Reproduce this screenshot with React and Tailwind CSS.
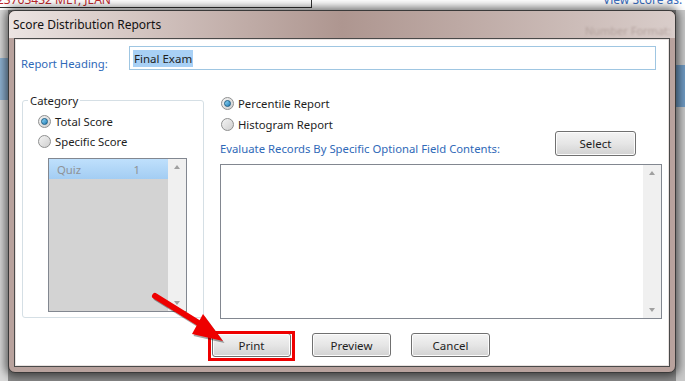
import React from "react";

const FONT = { fontFamily: '"Noto Sans", "Open Sans", sans-serif' };

function Radio({ checked, label }) {
  return (
    <div className="flex h-[15px] items-center gap-[4px] text-[11.3px] leading-[15px] text-[#1e1e1e]">
      <span className="flex h-[13px] w-[13px] items-center justify-center rounded-full border border-[#8e8f8f] bg-gradient-to-br from-[#f4f4f4] to-[#cfcfcf]">
        {checked && (
          <span className="h-[7px] w-[7px] rounded-full border border-[#1c5e85] bg-gradient-to-br from-[#8fd8f8] to-[#1a7fb8]" />
        )}
      </span>
      <span>{label}</span>
    </div>
  );
}

function Button({ children, className = "" }) {
  return (
    <div
      className={`flex h-[24px] w-[79px] items-center justify-center rounded-[3px] border border-[#707070] bg-gradient-to-b from-[#f3f3f3] via-[#e6e6e6] to-[#d2d2d2] text-[11.5px] leading-[15px] text-[#1e1e1e] shadow-[inset_0_0_0_1px_#fcfcfc] ${className}`}
    >
      {children}
    </div>
  );
}

function ScrollBar() {
  return (
    <div className="flex w-[18px] flex-col items-center justify-between bg-[#f0f0f0] py-[6px]">
      <span className="h-0 w-0 border-x-[3px] border-b-[4px] border-x-transparent border-b-[#a0a0a0]" />
      <span className="h-0 w-0 border-x-[3px] border-t-[4px] border-x-transparent border-t-[#a0a0a0]" />
    </div>
  );
}

export default function App() {
  return (
    <div className="relative h-[381px] w-[685px] overflow-hidden bg-[#8a8a8a]" style={FONT}>
      {/* background app behind dialog */}
      <div className="absolute left-0 top-0 h-[10px] w-[685px] bg-white" />
      <div className="absolute left-0 top-0 h-[8px] w-[312px] border-b border-r border-[#333]" />
      <span className="absolute left-[-3px] top-[-7px] text-[12px] leading-[14px] text-[#c0282d]">23763432 MLY, JEAN</span>
      <span className="absolute left-[603px] top-[-7px] text-[12px] leading-[14px] text-[#3a6ec0]">View Score as:</span>
      <div className="absolute left-0 top-[10px] h-[371px] w-[8px] bg-[#d8d8d8]">
        <div className="mt-[48px] h-[42px] bg-[#8fb3d3]" />
      </div>
      <div className="absolute right-0 top-[10px] h-[371px] w-[9px] bg-[#c8c8c8]">
        <div className="mt-[55px] h-[42px] bg-[#6f9ac2]" />
      </div>

      {/* dialog window */}
      <div className="absolute left-[8px] top-[10px] flex h-[363px] w-[668px] flex-col rounded-[7px] border border-[#3a3a3a] bg-[#b8a29d] shadow-[0_0_8px_3px_rgba(0,0,0,0.55)]">
        <div className="relative flex h-[27px] items-center rounded-t-[6px] bg-gradient-to-r from-[#ece4e2] via-[#ae9690] to-[#d9cdca] pl-[4px] text-[12px] leading-[16px] text-[#111]">
          <span className="relative">Score Distribution Reports</span>
          <span className="absolute right-[4px] top-[13px] text-[11px] leading-[14px] text-[#b3a29d] blur-[1px]">Number Format:</span>
        </div>
        <div className="mx-[5px] mb-[5px] flex flex-1 flex-col border border-[#4a4a4a] bg-white">
          <div className="flex flex-1 flex-col border border-[#e9e2e0]">
            {/* heading row */}
            <div className="mt-[6px] flex h-[24px] items-center pl-[5px] pr-[12px]">
              <span className="relative top-[5px] w-[108px] text-[11.3px] leading-[15px] text-[#2f69b8]">Report Heading:</span>
              <div className="flex h-[24px] flex-1 items-center border border-[#9fc6e2] pl-[3px]">
                <span className="bg-[#a8d0f5] px-[1px] text-[11.5px] leading-[17px] text-[#1e1e1e]">Final Exam</span>
              </div>
            </div>

            <div className="mt-[26px] flex pl-[6px]">
              {/* category group */}
              <div className="relative mt-[4px] flex h-[218px] w-[182px] flex-col rounded-[3px] border border-[#d5dfe5] pl-[15px] pt-[13px]">
                <span className="absolute -top-[8px] left-[5px] bg-white px-[2px] text-[11.3px] leading-[15px] text-[#1e1e1e]">Category</span>
                <Radio checked label="Total Score" />
                <div className="mt-[5px]">
                  <Radio label="Specific Score" />
                </div>
                <div className="ml-[10px] mt-[9px] flex h-[154px] w-[139px] border border-[#828790] bg-[#d3d3d3]">
                  <div className="flex-1">
                    <div className="flex h-[20px] items-center justify-between bg-gradient-to-b from-[#bfe0fc] to-[#a3cdf3] pl-[8px] pr-[28px] text-[11.3px] leading-[15px] text-[#8f9296]">
                      <span>Quiz</span>
                      <span>1</span>
                    </div>
                  </div>
                  <ScrollBar />
                </div>
              </div>

              {/* right column */}
              <div className="ml-[16px] flex w-[442px] flex-col">
                <div className="pl-[1px]">
                  <Radio checked label="Percentile Report" />
                  <div className="mt-[6px]">
                    <Radio label="Histogram Report" />
                  </div>
                </div>
                <div className="-mt-[1px] flex h-[25px] items-center justify-between pr-[26px]">
                  <span className="relative top-[5px] text-[11.3px] leading-[15px] text-[#2f69b8]">Evaluate Records By Specific Optional Field Contents:</span>
                  <Button className="h-[25px] w-[81px]">Select</Button>
                </div>
                <div className="mt-[8px] flex h-[155px] justify-end border border-[#828790] bg-white">
                  <ScrollBar />
                </div>
              </div>
            </div>

            {/* bottom buttons */}
            <div className="mt-[14px] flex pl-[196px]">
              <Button>Print</Button>
              <Button className="ml-[21px]">Preview</Button>
              <Button className="ml-[20px]">Cancel</Button>
            </div>
          </div>
        </div>
      </div>

      {/* annotation: red box + arrow */}
      <div className="absolute left-[208px] top-[331px] h-[30px] w-[87px] border-[3px] border-[#ee0000]" />
      <svg className="absolute left-0 top-0" width="685" height="381" viewBox="0 0 685 381">
        <g transform="translate(1.5,2)" opacity="0.35">
          <line x1="155" y1="296" x2="205" y2="327" stroke="#000" strokeWidth="6" strokeLinecap="round" />
          <polygon points="203,314 192,334 223,341" fill="#000" />
        </g>
        <line x1="155" y1="296" x2="205" y2="327" stroke="#ee0000" strokeWidth="6" strokeLinecap="round" />
        <polygon points="203,314 192,334 223,341" fill="#ee0000" />
      </svg>
    </div>
  );
}
